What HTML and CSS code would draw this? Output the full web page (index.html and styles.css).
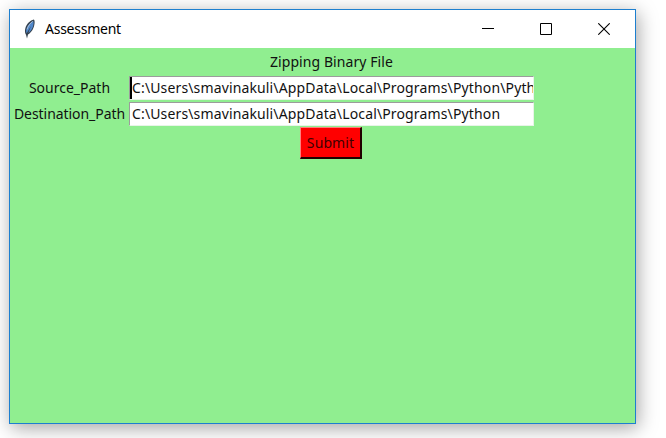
FILE: index.html
```html
<!DOCTYPE html>
<html lang="en">
<head>
<meta charset="utf-8">
<title>Assessment</title>
<link rel="stylesheet" href="styles.css">
</head>
<body>
<div class="window">
  <header class="titlebar">
    <svg class="feather" width="14" height="20" viewBox="0 0 14 20">
      <path d="M10.8 0.6C7.4 1.4 3.4 5 2.3 9.5C1.6 12 2 14.5 3 15.8L4 19.5L5 15.5C8.6 13.5 11.2 9 11.6 4C11.7 2.5 11.5 1.2 10.8 0.6Z" fill="#35424f"/>
      <path d="M10.2 2C7.4 3.3 4.6 6.3 3.5 9.8C3 11.8 3 13.3 3.7 14.2L8 7L5.3 14C8 12.3 10.4 8.4 10.6 4Z" fill="#5088cc"/>
      <path d="M9.7 2.4C7.2 4.2 4.9 7.2 4.1 10.4" fill="none" stroke="#a9bed6" stroke-width="1"/>
    </svg>
    <h1 class="title"><span class="t-title">Assessment</span></h1>
    <div class="controls">
      <svg width="12" height="12" viewBox="0 0 12 12"><path d="M0 5.5H12" stroke="#000"/></svg>
      <svg width="12" height="12" viewBox="0 0 12 12"><path d="M.5 .5H11.5V11.5H.5Z" fill="none" stroke="#000"/></svg>
      <svg width="12" height="12" viewBox="0 0 12 12"><path d="M.3 .3L11.7 11.7M11.7 .3L.3 11.7" stroke="#000" stroke-width="1.1"/></svg>
    </div>
  </header>
  <main class="form">
    <div class="heading"><span class="t-head">Zipping Binary File</span></div>
    <div class="label"><span class="t-src">Source_Path</span></div>
    <div class="entry focused"><span class="t-path">C:\Users\smavinakuli\AppData\Local\Programs\Python\Pyth</span></div>
    <div class="label"><span class="t-dst">Destination_Path</span></div>
    <div class="entry"><span class="t-path">C:\Users\smavinakuli\AppData\Local\Programs\Python</span></div>
    <button class="submit"><span class="t-sub">Submit</span></button>
  </main>
</div>
</body>
</html>
```
FILE: styles.css
```css
* { box-sizing: border-box; }
body {
  margin: 0;
  padding: 9px;
  height: 438px;
  overflow: hidden;
  background: #fff;
  font: 14px/20px "Noto Sans", sans-serif;
  color: #111;
}
.window {
  display: flex;
  flex-direction: column;
  width: 627px;
  height: 415px;
  border: 1px solid #1d7fcf;
  background: #90ee90;
  box-shadow: 2px 4px 18px rgba(0, 0, 0, .36);
}
.titlebar {
  display: flex;
  align-items: center;
  flex: none;
  height: 38px;
  padding: 0 25px 0 13px;
  background: #fff;
}
.title {
  margin: 0 0 0 8px;
  font-size: 14px;
  font-weight: 400;
  color: #000;
}
.controls { display: flex; gap: 46px; margin-left: auto; }
.controls svg, .feather { display: block; }
.form {
  display: grid;
  grid-template-columns: 119px 405px;
  grid-template-rows: 27px 26px 26px 32px;
  align-items: center;
}
.form span, .title span { display: inline-block; white-space: pre; }
.heading { grid-column: 1 / 3; padding-left: 260px; }
.label { text-align: center; }
.entry {
  height: 24px;
  padding: 1px 0 0 2px;
  overflow: hidden;
  background: #fff;
  border: 1px solid;
  border-color: #9c9c9c #e8f4e8 #e8f4e8 #9c9c9c;
}
.focused { box-shadow: inset 2px 0 #000; }
.submit {
  grid-column: 1 / 3;
  width: 62px;
  height: 32px;
  margin-left: 290px;
  padding: 0;
  font: inherit;
  color: #400000;
  background: #f00;
  border: solid;
  border-width: 1px 2px 2px 1px;
  border-color: #ff7f7f #200000 #200000 #ff7f7f;
}
.t-title { letter-spacing: -.25px; }
.t-head { letter-spacing: .07px; }
.t-src { letter-spacing: 0; }
.t-dst { letter-spacing: -.06px; }
.t-path { letter-spacing: .14px; }
.t-sub { letter-spacing: .1px; }
```
